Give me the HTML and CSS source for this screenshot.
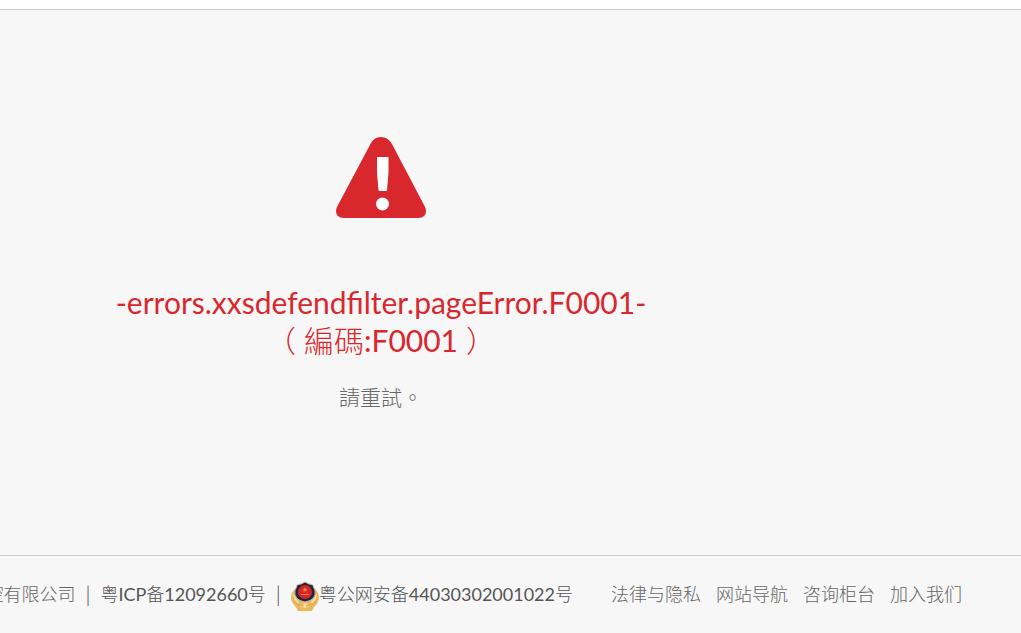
FILE: index.html
```html
<!DOCTYPE html>
<html lang="zh-Hant">
<head>
    <meta charset="UTF-8">
    <meta name="viewport" content="width=device-width, initial-scale=1.0">
    <title>Error F0001</title>
    <link rel="stylesheet" href="styles.css">
</head>
<body>
    <main class="error-page">
        <div class="error-content">
            <svg class="error-icon" viewBox="0 0 90 82" aria-hidden="true">
                <path fill="#d9272e" d="M35 6 Q38 0 45 0 Q52 0 56 7 L88 68 Q90 71 90 74 Q90 81 82 81 H8 Q0 81 0 74 Q0 71 2 68 Z"/>
                <path fill="#fff" d="M41 20 H52.500 V36 L51 53 Q51 54 50 54 H43.500 Q42.500 54 42.500 53 L41 36 Z"/>
                <circle cx="46.500" cy="67" r="6.500" fill="#fff"/>
            </svg>
            <h1 class="error-title">-errors.xxsdefendfilter.pageError.F0001-<br><span class="paren-open">（</span>編碼:F0001<span class="paren-close">）</span></h1>
            <p class="error-text">請重試。</p>
        </div>
    </main>
    <footer class="footer" lang="zh-Hans">
        <div class="footer-info">
            <span>控有限公司</span>
            <span class="divider">|</span>
            <a class="record" href="#">粤ICP备12092660号</a>
            <span class="divider">|</span>
            <a class="record" href="#">
                <svg class="badge" viewBox="0 0 28 30" aria-hidden="true">
                    <path fill="#e9b75c" d="M5 7 Q0 11 0 17 Q1 23 5 26 L7 30 H21 L23 26 Q27 23 28 17 Q28 11 23 7 L20 20 H8 Z"/>
                    <path fill="#f5dda0" d="M2 12 L8 21 L7 23 Q2 19 2 12 M26 12 L20 21 L21 23 Q26 19 26 12 M8 25 L14 22 L20 25 L14 27 Z"/>
                    <path fill="#192553" stroke="#dfc080" d="M14 1 Q17 3 22 4 Q22 6 24 9 Q26 19 14 21 Q2 19 4 9 Q6 6 6 4 Q11 3 14 1 Z"/>
                    <circle cx="14" cy="11" r="7" fill="#d8261f"/>
                    <path fill="#ee8050" d="M14 6 L15 8 H17 L15 9 L16 11 L14 10 L12 11 L13 9 L11 8 H13 Z M10 13 H18 V14 H10 Z"/>
                    <path fill="none" stroke="#d9a044" d="M3 20 Q7 25 13 25 M25 20 Q21 25 15 25"/>
                </svg>
                <span>粤公网安备44030302001022号</span>
            </a>
        </div>
        <nav class="footer-links">
            <a href="#">法律与隐私</a>
            <a href="#">网站导航</a>
            <a href="#">咨询柜台</a>
            <a href="#">加入我们</a>
        </nav>
    </footer>
</body>
</html>
```
FILE: styles.css
```css
* {
    box-sizing: border-box;
}
body {
    margin: 0;
    padding-top: 9px;
    min-height: 100vh;
    display: flex;
    flex-direction: column;
    background-color: #fff;
    color: #666;
    font-family: Lato, "Noto Sans CJK TC Light", "Noto Sans CJK TC", sans-serif;
}
.error-page {
    flex: 1;
    padding: 127px 259px 0 0;
    background-color: #f7f7f7;
    border-top: 1px solid #ccc;
}
.error-content {
    display: flex;
    flex-direction: column;
    align-items: center;
    text-align: center;
}
.error-icon {
    width: 90px;
    height: 82px;
}
.error-title {
    margin: 64px 0 0;
    color: #d9272e;
    font-size: 30px;
    font-weight: 400;
    line-height: 38px;
}
.paren-open {
    margin-right: 8px;
}
.paren-close {
    margin-left: 8px;
}
.error-text {
    margin: 24px 0 0;
    font-size: 21px;
    line-height: 28px;
}
.footer {
    display: flex;
    justify-content: flex-end;
    align-items: center;
    gap: 38px;
    height: 78px;
    padding: 0 59px 2px 0;
    overflow: hidden;
    white-space: nowrap;
    background-color: #f7f7f7;
    border-top: 1px solid #ccc;
    font-family: Lato, "Noto Sans CJK SC Light", "Noto Sans CJK SC", sans-serif;
    font-size: 18px;
    line-height: 24px;
}
.footer-info,
.footer-links,
.record {
    display: flex;
    align-items: center;
}
.footer-info {
    gap: 10px;
}
.divider {
    color: #444;
    font-size: 21px;
    font-weight: 300;
}
.footer-links {
    gap: 15px;
}
.footer a {
    color: #666;
    text-decoration: none;
}
.footer .record {
    color: #555;
}
.badge {
    width: 28px;
    height: 30px;
    margin-top: 4px;
}
```
